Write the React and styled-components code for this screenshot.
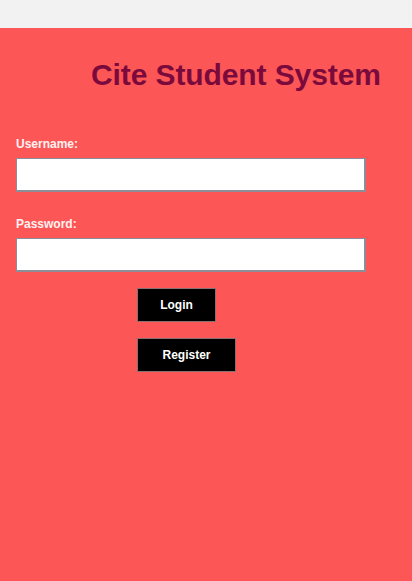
import React from "react";
import styled, { createGlobalStyle } from "styled-components";

const Global = createGlobalStyle`
  html, body { margin: 0; padding: 0; background: #f2f2f2; }
  body { font-family: "Liberation Sans", Arial, sans-serif; }
`;

const Page = styled.div`
  padding-top: 28px;
  background: #f2f2f2;
`;

const Panel = styled.div`
  background: #fd5656;
  height: 553px;
  box-sizing: border-box;
  padding: 28px 16px 0 16px;
  display: flex;
  flex-direction: column;
`;

const Title = styled.h1`
  margin: 0 0 0 75px;
  font-size: 30px;
  line-height: 37px;
  font-weight: bold;
  letter-spacing: -0.1px;
  color: #7b0a3c;
  white-space: nowrap;
`;

const Form = styled.form`
  margin-top: 44px;
  display: flex;
  flex-direction: column;
`;

const Label = styled.label`
  font-size: 12px;
  font-weight: bold;
  color: #fff2f2;
  line-height: 14px;
  margin-bottom: 7px;
`;

const Input = styled.input`
  box-sizing: border-box;
  width: 350px;
  height: 34px;
  margin: 0 0 25px 0;
  background: #fff;
  border-style: solid;
  border-color: #8d8d99;
  border-width: 1px 2px 2px 1px;
  outline: none;
  padding: 0 4px;
  font-family: inherit;
`;

const Buttons = styled.div`
  display: flex;
  flex-direction: column;
  align-items: flex-start;
  gap: 16px;
  padding-left: 121px;
  margin-top: -9px;
`;

const Button = styled.button`
  box-sizing: border-box;
  width: ${(p) => p.$w}px;
  height: 34px;
  background: #000;
  color: #fff;
  border: 1px solid #8a7070;
  font-family: "Liberation Sans", Arial, sans-serif;
  font-size: 12px;
  font-weight: bold;
  padding: 0;
  cursor: pointer;
`;

export default function App() {
  return (
    <>
      <Global />
      <Page>
        <Panel>
          <Title>Cite Student System</Title>
          <Form onSubmit={(e) => e.preventDefault()}>
            <Label htmlFor="u">Username:</Label>
            <Input id="u" type="text" />
            <Label htmlFor="p">Password:</Label>
            <Input id="p" type="password" />
            <Buttons>
              <Button type="submit" $w={79}>Login</Button>
              <Button type="button" $w={99}>Register</Button>
            </Buttons>
          </Form>
        </Panel>
      </Page>
    </>
  );
}
